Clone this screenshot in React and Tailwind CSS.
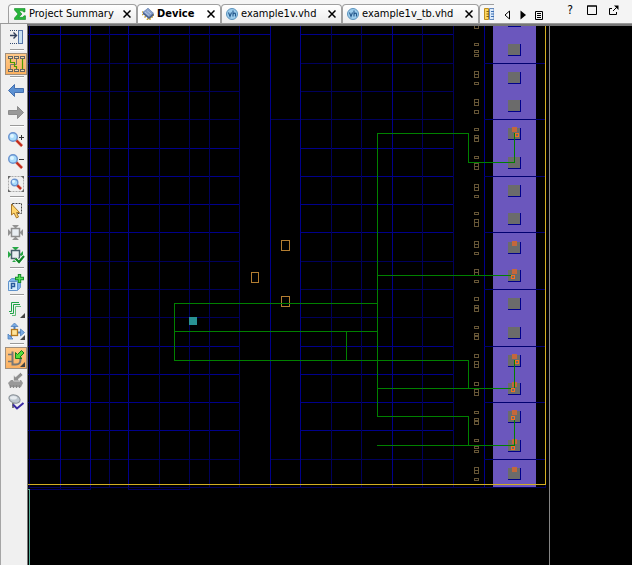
import React from "react";

const BRIGHT = "#00008b";
const DIM = "#00005c";

/* ---------- toolbar icons, each on a 20 x 20 grid ---------- */

function Icon({ children }) {
  return (
    <svg viewBox="0 0 20 20" className="h-5 w-5 shrink-0" fill="none" aria-hidden="true">
      {children}
    </svg>
  );
}

const Corner = () => <path d="M19 14v5h-5z" fill="#444" />;

const DockIcon = () => (
  <Icon>
    <path d="M4 3.5h9M4 16.5h9" stroke="#334a70" strokeDasharray="1 1" />
    <path d="M4 8.5h6M7.5 5.5l3 3-3 3" stroke="#33415c" strokeWidth="1.4" />
    <rect x="12.5" y="3.5" width="4" height="13" fill="#c9e2f2" stroke="#5675a8" />
  </Icon>
);

const RoutingIcon = () => (
  <Icon>
    <path d="M10.5 5v5.5h-6V15" stroke="#777" />
    <path d="M4.5 5v3.5h4v4h2V15M16.5 5v10" stroke="#4c9a00" strokeWidth="1.2" />
    {[2.5, 8.5, 14.5].map((x) => (
      <g key={x} fill="#f3d9ae" stroke="#666">
        <rect x={x} y="2.5" width="4" height="2" />
        <rect x={x} y="15.5" width="4" height="2" />
      </g>
    ))}
  </Icon>
);

const BackIcon = () => (
  <Icon>
    <path d="M2.5 9.5l6-6v4h9v4h-9v4z" fill="#5b90d2" stroke="#456fae" />
  </Icon>
);

const ForwardIcon = () => (
  <Icon>
    <path d="M17.5 9.5l-6-6v4h-9v4h9v4z" fill="#999" stroke="#8c8c8c" />
  </Icon>
);

function Lens({ cx, cy, r, ex, ey }) {
  const k = r * 0.75;
  return (
    <g>
      <path d={`M${cx + k} ${cy + k}L${ex} ${ey}`} stroke="#e9a59a" strokeWidth="3.2" />
      <path d={`M${cx + k} ${cy + k}L${ex} ${ey}`} stroke="#c02a18" strokeWidth="2" />
      <circle cx={cx} cy={cy} r={r} fill="#a9dcfb" stroke="#6a93cf" strokeWidth="1.4" />
      <circle cx={cx - 1} cy={cy - 1} r={r * 0.45} fill="#dff5ff" />
    </g>
  );
}

const ZoomInIcon = () => (
  <Icon>
    <Lens cx={7} cy={7} r={4.3} ex={16} ey={16} />
    <path d="M13 7.5h5M15.5 5v5" stroke="#333" />
  </Icon>
);

const ZoomOutIcon = () => (
  <Icon>
    <Lens cx={7} cy={7} r={4.3} ex={16} ey={16} />
    <path d="M13 7.5h5" stroke="#333" />
  </Icon>
);

const ZoomFitIcon = () => (
  <Icon>
    <rect x="2.5" y="2.5" width="15" height="15" stroke="#aaa" strokeDasharray="2 1" />
    <path d="M2 5V2h3zM15 2h3v3zM18 15v3h-3zM5 18H2v-3z" fill="#666" />
    <Lens cx={8.5} cy={8.5} r={3.3} ex={15} ey={15} />
  </Icon>
);

const SelectIcon = () => (
  <Icon>
    <rect x="6.5" y="2.5" width="9" height="10" stroke="#444" strokeDasharray="2 1" />
    <path d="M5.5 3v11l2.5-2 2.500 5 2-1-2-4.500h3z" fill="#ffd56e" stroke="#a9782a" />
  </Icon>
);

function FitShape({ tip, edge }) {
  return (
    <g>
      <path d="M6 2h7l-3.5 3.5zM6 17h7l-3.5-3.5zM2 6v7l3.5-3.5zM17 6v7l-3.5-3.5z" fill={tip} />
      <rect x="5.5" y="5.5" width="8" height="8" fill="#e9eef2" stroke={edge} strokeWidth="1.5" />
    </g>
  );
}

const FitIcon = () => (
  <Icon>
    <FitShape tip="#929292" edge="#8e8e8e" />
  </Icon>
);

const AutoFitIcon = () => (
  <Icon>
    <FitShape tip="#26a845" edge="#48606c" />
    <path d="M9.5 13.5l3.5 3.5 5-6" stroke="#fff" strokeWidth="4" />
    <path d="M9.5 13.5l3.5 3.5 5-6" stroke="#118427" strokeWidth="2.2" />
  </Icon>
);

const PblockIcon = () => (
  <Icon>
    <path d="M2.5 9.5l3-3h9v9l-3 3h-9z" fill="#7eb3e6" stroke="#6a9bd1" />
    <rect x="2.5" y="9.5" width="9" height="9" rx="1" fill="#d6ecfb" stroke="#5d91cb" />
    <path d="M5.5 17v-5.5h3v3h-3" stroke="#285b9b" strokeWidth="1.5" />
    <path d="M13.5 2v9M9 6.5h9" stroke="#168c2c" strokeWidth="3.4" />
    <path d="M13.5 3v7M10 6.5h7" stroke="#5be25c" strokeWidth="1.4" />
  </Icon>
);

const RoutesIcon = () => (
  <Icon>
    <path d="M3 12.5h2.5v-9H13" stroke="#1ea447" />
    <path d="M4 14.5h3.5v-9H14" stroke="#1ea447" />
    <path d="M6 16.5h3.5v-9H15" stroke="#63b878" />
    <Corner />
  </Icon>
);

const MoveIcon = () => (
  <Icon>
    <path d="M8.5 9V5M12 11.5h3M6 14l-2 2" stroke="#4f80bd" strokeWidth="2" />
    <path d="M5 5.5L8.5 2 12 5.5zM14.5 8l4 3.5-4 3.5zM2 13v5h5z" fill="#79aae3" stroke="#4f80bd" strokeWidth=".8" />
    <rect x="5.5" y="8.5" width="6" height="6" fill="#ffe49a" stroke="#b4781c" strokeWidth="1.3" />
    <Corner />
  </Icon>
);

const CellDragIcon = () => (
  <Icon>
    <path d="M2 6.5h4M2 13.5h4M13 10.5h3" stroke="#777" strokeWidth="1.6" />
    <path d="M6.5 3.5v13h3c5 0 5-3 5-6" stroke="#777" strokeWidth="2" />
    <path d="M9.5 10.5V4.5l2 2 4-4 2.5 2.5-4 4 2 1.5z" fill="#55dd3c" stroke="#167d1b" />
    <Corner />
  </Icon>
);

const ChipDragIcon = () => (
  <Icon>
    <path d="M2 13l3-3h10l2 3-2 4H4z" fill="#999" />
    <path d="M4.5 15v3M7.5 15v3M10.5 15v3M13.5 15v3" stroke="#888" strokeWidth="1.4" />
    <path d="M7.5 11V5l2 2 5-4.5 2.5 2.5-5 4.5 2 1.5z" fill="#909090" stroke="#ececec" strokeWidth=".7" />
  </Icon>
);

const VerifyIcon = () => (
  <Icon>
    <path d="M7 11v5" stroke="#777" strokeWidth="2" />
    <ellipse cx="8.5" cy="7" rx="5.8" ry="4" transform="rotate(20 8.5 7)" fill="#bfc8d0" stroke="#8b9298" />
    <ellipse cx="7.5" cy="5.8" rx="3.5" ry="1.8" fill="#e6ebef" />
    <path d="M7 12.5l4 4 6.5-5.500" stroke="#3929a5" strokeWidth="2" />
  </Icon>
);

const TOOL_GROUPS = [
  [["Dock view", DockIcon]],
  [["Show routing", RoutingIcon, true]],
  [["Back", BackIcon], ["Forward", ForwardIcon]],
  [["Zoom in", ZoomInIcon], ["Zoom out", ZoomOutIcon], ["Zoom fit", ZoomFitIcon]],
  [["Select area", SelectIcon], ["Fit selection", FitIcon], ["Auto-fit selection", AutoFitIcon]],
  [["Draw Pblock", PblockIcon]],
  [["Show routes", RoutesIcon], ["Move", MoveIcon]],
  [["Cell drag mode", CellDragIcon, true], ["Chip drag mode", ChipDragIcon], ["Verify", VerifyIcon]],
];

function Toolbar() {
  return (
    <aside className="flex w-7 shrink-0 flex-col border-l border-[#a5a5a5] border-r border-r-[#777] bg-[#f0f0f0] pt-0.5 pl-1">
      {TOOL_GROUPS.map((group, i) => (
        <React.Fragment key={i}>
          {i > 0 && (
            <div className="flex h-[5px] items-start pt-px pl-[5px]">
              <div className="h-0.5 w-3.5 border-t border-[#999] bg-white" />
            </div>
          )}
          {group.map(([label, Glyph, active]) => (
            <button
              key={label}
              type="button"
              aria-label={label}
              aria-pressed={!!active}
              className={
                "flex h-[22px] w-[22px] items-center justify-center border " +
                (active
                  ? "border-[#a08f7d] bg-gradient-to-b from-[#ffc988] to-[#fbb161]"
                  : "border-transparent")
              }
            >
              <Glyph />
            </button>
          ))}
        </React.Fragment>
      ))}
    </aside>
  );
}

/* ---------- tab strip ---------- */

const SigmaIcon = () => (
  <svg viewBox="0 0 12 12" className="h-3 w-3 shrink-0" aria-hidden="true">
    <path d="M.5.5h10.5v3.5H9.5L8.5 2.8H5L8 6 4.8 9.3h4L10 7.800h1.5v3.700H.5V10L4 6 .5 2z" fill="#27b63a" stroke="#128a25" strokeWidth=".6" />
  </svg>
);

const ChipIcon = () => (
  <svg viewBox="0 0 12 12" className="h-3 w-3 shrink-0" aria-hidden="true">
    <path d="M0 4.5l1-1M0 7l1.5-1M2.5 9.5L4 8M5 12l1.5-2M8 12V9M10 10V7.5M11.5 8V6" stroke="#c7a43c" strokeWidth="1.5" />
    <path d="M1 4l5-4 5.5 5v2.5L7 11 1 6z" fill="#4a6190" />
    <path d="M1 4l5-4 5.5 5L7 9z" fill="#87a0cb" />
    <path d="M3 4l4 3.5M5 2.5L9 6" stroke="#b7c8e4" />
  </svg>
);

const VhIcon = () => (
  <svg viewBox="0 0 12 12" className="h-3 w-3 shrink-0" aria-hidden="true">
    <circle cx="6" cy="6" r="5.5" fill="#9dcdec" stroke="#5b93bd" />
    <path d="M2.5 4.5l1.5 4 1.5-4M7 2.5v6M7 6q2.5-2 2.5.5v2" fill="none" stroke="#24588c" strokeWidth="1.1" />
  </svg>
);

const CloseIcon = () => (
  <svg viewBox="0 0 8 8" className="h-2 w-2" aria-hidden="true">
    <path d="M.5.5l7 7M7.5.5l-7 7" stroke="#000" strokeWidth="1.5" />
  </svg>
);

const TABS = [
  ["Project Summary", SigmaIcon, "w-[129px] pl-[5px]"],
  ["Device", ChipIcon, "w-[84px] pl-1", true],
  ["example1v.vhd", VhIcon, "w-[121px] pl-1"],
  ["example1v_tb.vhd", VhIcon, "w-[137px] pl-1"],
];

function TabStrip() {
  return (
    <header className="flex h-6 shrink-0 items-end border-b border-[#999] bg-[#f4f4f4] pl-2">
      <div className="flex min-w-0 items-end" role="tablist">
        {TABS.map(([label, Glyph, size, active]) => (
          <div
            key={label}
            className={
              "flex h-[19px] shrink-0 items-center gap-[3px] rounded-t-sm border border-b-0 border-[#a0a0a0] pr-[5px] " +
              size +
              (active ? " bg-white" : " bg-gradient-to-b from-white to-[#ececec]")
            }
          >
            <Glyph />
            <button type="button" role="tab" aria-selected={!!active} className={"whitespace-nowrap " + (active ? "font-bold" : "")}>
              {label}
            </button>
            <button type="button" aria-label={"Close " + label} className="ml-auto">
              <CloseIcon />
            </button>
          </div>
        ))}
        <div className="flex h-[19px] w-[15px] shrink-0 items-center overflow-hidden rounded-tl-sm border-t border-l border-[#a0a0a0] bg-[#f7f7f7] pl-1">
          <svg viewBox="0 0 10 12" className="h-3 w-2.5 shrink-0" aria-hidden="true">
            <path d="M.5.5h4v11h-4z" fill="#ffd75e" stroke="#bd8e20" />
            <path d="M2.5 3.5H5M2.5 6H5M2.5 8.5H5" stroke="#886014" />
            <path d="M5.5.5H10v11H5.500z" fill="#dbeafa" stroke="#6689ba" />
            <path d="M7 3.5h3M7 6h3M7 8.5h3" stroke="#3d70b5" />
          </svg>
        </div>
      </div>
      <div className="ml-auto flex items-center self-stretch">
        <div className="flex items-center gap-1.5 pt-1.5 pr-[21px]">
          <button type="button" aria-label="Previous tab" className="flex w-2.5 justify-center">
            <svg viewBox="0 0 6 10" className="h-2.5 w-1.5"><path d="M5.5 1v8l-4.5-4z" fill="#fff" stroke="#000" /></svg>
          </button>
          <button type="button" aria-label="Next tab" className="flex w-2.5 justify-center">
            <svg viewBox="0 0 6 10" className="h-2.5 w-1.5"><path d="M.5.5v9L6 5z" fill="#000" /></svg>
          </button>
          <button type="button" aria-label="Tab list" className="flex w-2.5 justify-center">
            <svg viewBox="0 0 8 10" className="h-2.5 w-2"><path d="M.5 1.5h7v8h-7zM2 3.5h4M2 5.5h4M2 7.5h4" fill="none" stroke="#000" /></svg>
          </button>
        </div>
        <div className="flex items-center gap-3 pr-[13px] pb-1">
          <button type="button" aria-label="Help" className="w-2.5 text-[12px]">?</button>
          <button type="button" aria-label="Maximize">
            <svg viewBox="0 0 10 10" className="h-2.5 w-2.5"><path d="M.5 1h9v8.5h-9z" fill="none" stroke="#000" /><path d="M0 1h10" stroke="#000" /></svg>
          </button>
          <button type="button" aria-label="Float">
            <svg viewBox="0 0 10 10" className="h-2.5 w-2.5"><path d="M3 3.5H.5v6h7V7M4 6l4-4" fill="none" stroke="#000" /><path d="M5 .5h4.5V5z" fill="#000" /></svg>
          </button>
        </div>
      </div>
    </header>
  );
}

/* ---------- device floorplan ---------- */

const COLUMNS = [
  [29], [60, 1], [90, 1], [109], [128, 1], [159], [189], [209], [239],
  [270, 1], [300, 1], [331], [361], [392, 1], [422], [453], [484, 1],
];
const ROWS = [
  [34, 1], [63], [91], [119], [148, 1], [176, 1], [204, 1], [232, 1], [261],
  [289], [317], [346, 1], [374, 1], [402, 1], [430, 1], [459],
];
const BANKS = [63, 119, 176, 232, 289, 346, 402, 459];
const PADS = [15, 44, 72, 100, 128, 157, 185, 213, 242, 270, 298, 327, 355, 383, 411, 440, 468];
const BUFFERS = [
  [25, 4], [43, 3], [50, 3], [54, 3], [71, 4], [74, 4], [82, 3], [99, 4], [102, 4], [110, 4],
  [128, 3], [135, 3], [138, 4], [156, 3], [163, 4], [166, 4], [184, 4], [187, 4], [195, 3],
  [212, 3], [219, 4], [222, 5], [241, 4], [244, 4], [252, 3], [269, 4], [272, 4], [280, 3],
  [297, 4], [305, 3], [308, 4], [326, 3], [333, 3], [336, 4], [354, 4], [361, 4], [364, 4],
  [382, 4], [389, 4], [392, 4], [411, 3], [418, 3], [421, 4], [439, 3], [446, 3], [450, 3],
  [467, 4], [470, 4], [478, 3],
];
const PORTS = [127, 241, 269, 354, 382, 410, 439, 467];
const PINS = [[515, 133], [511, 275], [515, 360], [511, 388], [511, 416], [511, 446]];
const SITES = [[281, 240, 9], [251, 272, 8], [281, 296, 9]];
const NETS =
  "M174.5 303.5H377.5M174.5 303V361M174.5 331.5H377.5M174 360.5H468.5V388.5M346.5 331V360" +
  "M377.5 416.5V133.5H468.5V162.5H514.5V133M377 275.5H514" +
  "M377 388.5H514.5V360M377 416.5H468.5V445.5M377 445.5H514.5V416";

const strokeOf = (bright) => (bright ? BRIGHT : DIM);

function Floorplan() {
  return (
    <main className="min-w-0 flex-1 overflow-hidden border-t-2 border-[#777] bg-black">
      <svg
        width="604"
        height="539"
        viewBox="28 26 604 539"
        shapeRendering="crispEdges"
        fill="none"
        role="img"
        aria-label="Device floorplan"
      >
        {ROWS.map(([y, b]) => (
          <path
            key={y}
            stroke={strokeOf(b)}
            d={`M28 ${y + 0.5}H${y === 34 ? 270 : 239}M${y === 119 || y === 459 ? 270 : 300} ${y + 0.5}H453`}
          />
        ))}
        {COLUMNS.map(([x, b]) => (
          <path key={x} stroke={strokeOf(b)} d={`M${x + 0.5} 26V487`} />
        ))}
        <path stroke={DIM} d="M28 487.5H546M28 489.5H90.5V487M60.5 487V490M128.5 487V489.5H189.5V487M545.5 485V488" />

        <rect x="493" y="26" width="43" height="461" fill="#6b57bd" />
        <path stroke="#000070" d={BANKS.map((y) => `M484 ${y + 0.5}H545`).join("")} />
        {PADS.map((y) => (
          <g key={y}>
            <rect x="508" y={y} width="13" height="12" fill="#00008b" />
            <rect x="508" y={y} width="12" height="11" fill="#6b6b6b" />
          </g>
        ))}
        {BUFFERS.map(([y, h]) => (
          <rect key={y} x="474.5" y={y + 0.5} width="4" height={h - 1} stroke="#655536" />
        ))}

        <path stroke="#d2ae22" d="M28 484.5H545.5V26" />
        <path stroke="#858585" d="M549.5 26V565" />
        <path stroke="#55aa96" d="M28 489.5H29.5V565" />

        {SITES.map(([x, y, w]) => (
          <rect key={y} x={x + 0.5} y={y + 0.5} width={w - 1} height="10" stroke="#b27d31" />
        ))}
        <rect x="189" y="317" width="8" height="8" fill="#289292" />

        {PORTS.map((y) => (
          <rect key={y} x="512" y={y} width="5" height="5" fill="#c4673c" />
        ))}
        <path stroke="#008000" d={NETS} />
        {PINS.map(([x, y]) => (
          <rect key={y} x={x + 0.5} y={y + 0.5} width="3" height="3" stroke="#f47020" />
        ))}
      </svg>
    </main>
  );
}

export default function App() {
  return (
    <div className="flex h-screen flex-col overflow-hidden bg-[#f0f0f0] font-['DejaVu_Sans_Condensed','Noto_Sans',sans-serif] text-[11px] leading-4 text-black">
      <TabStrip />
      <div className="flex min-h-0 flex-1">
        <Toolbar />
        <Floorplan />
      </div>
    </div>
  );
}
